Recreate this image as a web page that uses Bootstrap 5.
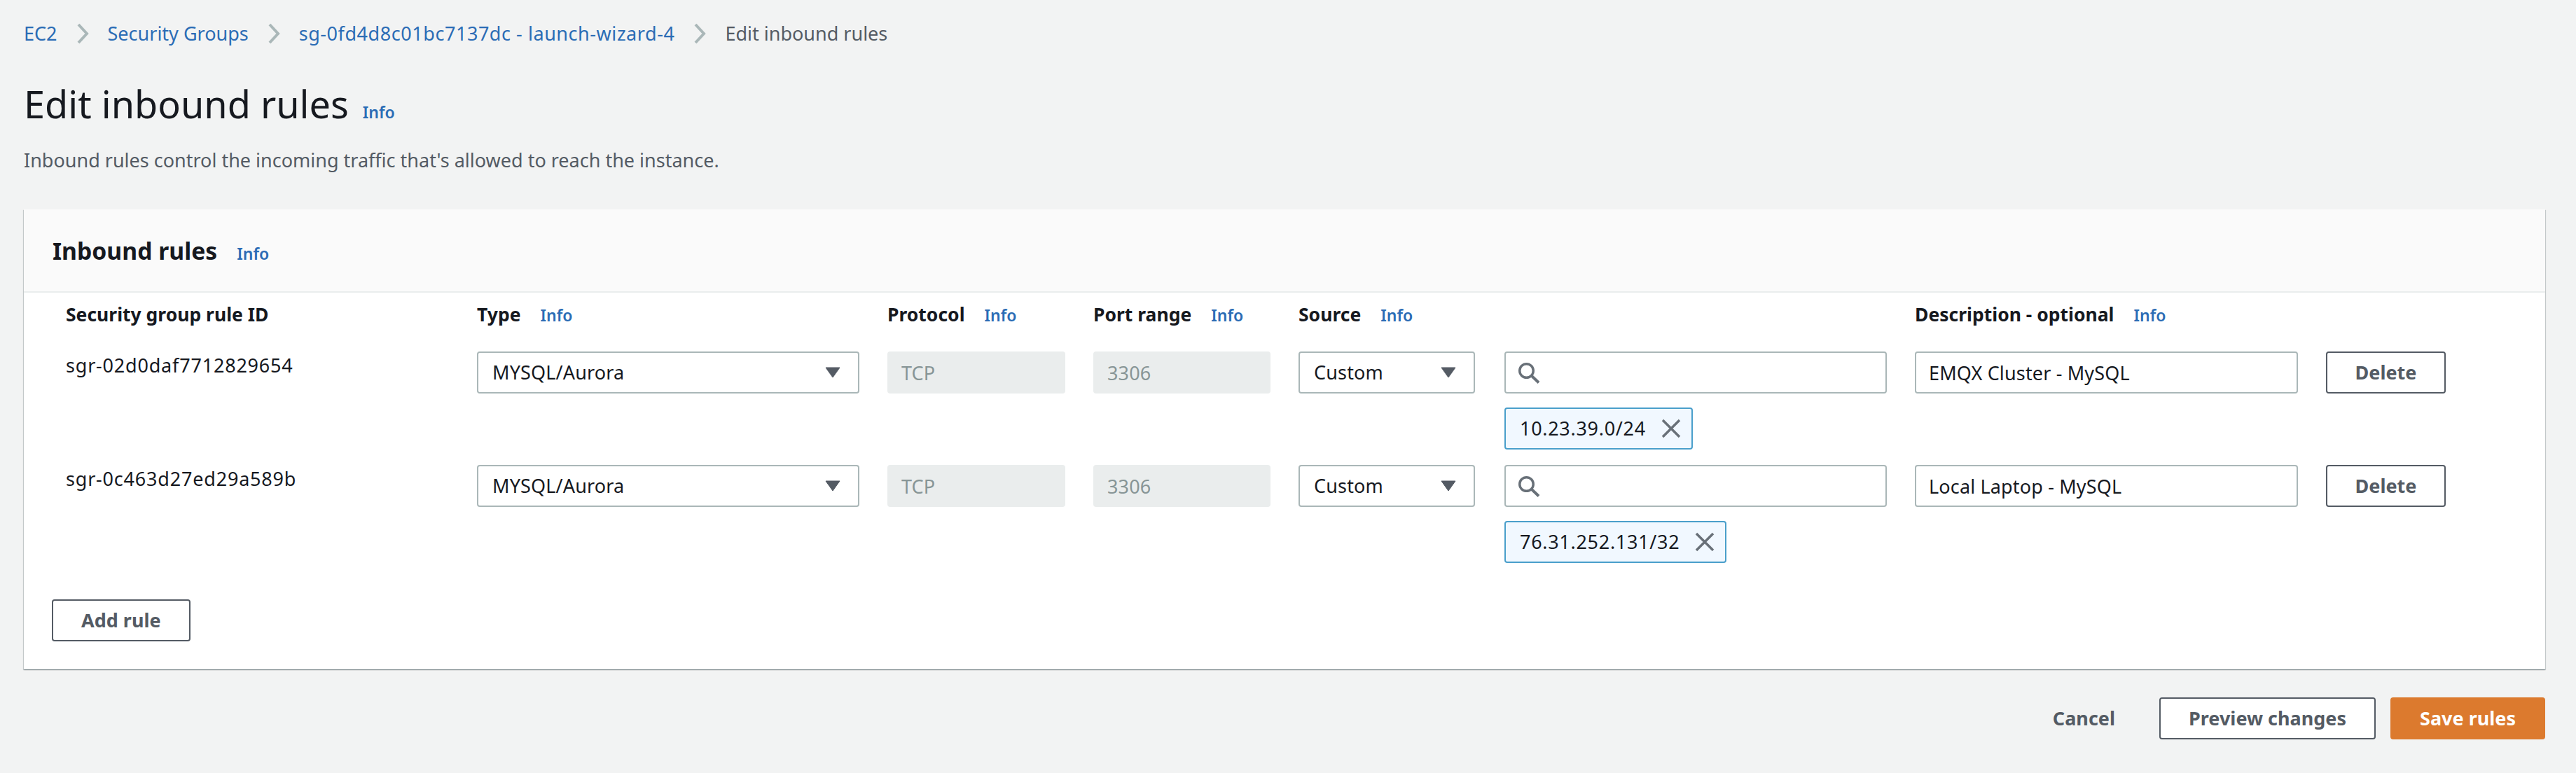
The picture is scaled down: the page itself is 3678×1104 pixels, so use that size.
<!DOCTYPE html>
<html lang="en">
<head>
  <meta charset="UTF-8">
  <meta name="viewport" content="width=device-width, initial-scale=1">
  <title>Edit inbound rules</title>
  <link href="https://cdn.jsdelivr.net/npm/bootstrap@5.3.2/dist/css/bootstrap.min.css" rel="stylesheet">
  <style>
    body { background: #f2f3f3; color: #16191f; font-family: "Noto Sans", sans-serif; font-size: 27px; line-height: 36px; }
    a { color: #2b6cb5; text-decoration: none; }
    .page-wrap { padding: 30px 44px 0 34px; }

    .crumbs { margin: 0; gap: 27px; align-items: center; --bs-breadcrumb-margin-bottom: 0; font-size: 27px; }
    .crumbs .breadcrumb-item { padding: 0; color: #545b64; }
    .crumbs .breadcrumb-item::before { display: none; }
    .crumb-sep { width: 18px; height: 30px; flex: none; }
    .num-text { letter-spacing: .55px; }

    .page-title { font-size: 54px; line-height: 64px; font-weight: 400; margin: 50px 0 31px; }
    .page-title .info-link { margin-left: 20px; }
    .info-link { font-size: 23px; font-weight: 600; margin-left: 28px; line-height: 1; }
    .page-desc { color: #545b64; margin: 0; }

    .rules-card { margin-top: 52px; border: 0; border-radius: 0; box-shadow: 0 1px 1px 0 rgba(0,28,36,.3), 1px 1px 1px 0 rgba(0,28,36,.15), -1px 1px 1px 0 rgba(0,28,36,.15); }
    .rules-head { background: #fafafa; border-bottom: 2px solid #eaeded; border-radius: 0 !important; height: 119px; padding: 0 41px; display: flex; align-items: center; }
    .rules-head h2 { font-size: 33.7px; font-weight: 700; line-height: 40px; margin: 0; }
    .rules-body { padding: 13px 40px 40px; }

    .rule-grid { display: grid; grid-template-columns: 547px 546px 254px 253px 254px 546px 547px 171px; column-gap: 40px; row-gap: 22px; padding-left: 20px; }
    .col-label { font-weight: 700; font-size: 26.5px; margin-bottom: 13px; white-space: nowrap; }
    .rule-id { line-height: 40px; letter-spacing: .8px; }

    .aws-field { height: 60px; border: 2px solid #aab7b8; border-radius: 4px; font-size: 27px; padding: 0 18px; color: #16191f; box-shadow: none; line-height: 56px; letter-spacing: .15px; }
    .aws-field:disabled { background: #eaeded; border-color: #eaeded; color: #879596; opacity: 1; }
    select.aws-field { background-image: none; padding: 0 20px; }
    .source-field { width: 252px; }
    .field-arrow { position: absolute; right: 27px; top: 22px; width: 22px; height: 16px; pointer-events: none; }
    .field-search { position: absolute; left: 20px; top: 16px; width: 32px; height: 30px; }
    .search-input { padding-left: 60px; }

    .ip-token { display: inline-flex; align-items: center; gap: 22px; height: 60px; margin-top: 20px; padding: 0 15px 0 20px; background: #f1f8ff; border: 2px solid #4a9fcb; border-radius: 4px; letter-spacing: .7px; }
    .ip-token svg { width: 28px; height: 28px; }

    .btn-aws { height: 60px; padding: 0 40px; border: 2px solid #545b64; border-radius: 4px; background: #fff; color: #545b64; font-size: 27px; font-weight: 700; line-height: 56px; white-space: nowrap; }
    .btn-aws-link { border-color: transparent; background: transparent; }
    .btn-aws-save { background: #dc7a2e; border-color: #dc7a2e; color: #fff; }
    .add-row { margin-top: 52px; }
    .form-actions { gap: 21px; margin-top: 40px; }
  </style>
</head>
<body>
  <div class="page-wrap">

    <nav aria-label="breadcrumb">
      <ol class="breadcrumb crumbs">
        <li class="breadcrumb-item"><a href="#">EC2</a></li>
        <svg class="crumb-sep" viewBox="0 0 18 30"><path d="M3 2l12 13L3 28" fill="none" stroke="#aab7b8" stroke-width="4"/></svg>
        <li class="breadcrumb-item"><a href="#">Security Groups</a></li>
        <svg class="crumb-sep" viewBox="0 0 18 30"><path d="M3 2l12 13L3 28" fill="none" stroke="#aab7b8" stroke-width="4"/></svg>
        <li class="breadcrumb-item"><a class="num-text" href="#">sg-0fd4d8c01bc7137dc - launch-wizard-4</a></li>
        <svg class="crumb-sep" viewBox="0 0 18 30"><path d="M3 2l12 13L3 28" fill="none" stroke="#aab7b8" stroke-width="4"/></svg>
        <li class="breadcrumb-item active" aria-current="page">Edit inbound rules</li>
      </ol>
    </nav>

    <h1 class="page-title">Edit inbound rules<a class="info-link" href="#">Info</a></h1>
    <p class="page-desc">Inbound rules control the incoming traffic that's allowed to reach the instance.</p>

    <div class="card rules-card">
      <div class="card-header rules-head">
        <h2>Inbound rules<a class="info-link" href="#">Info</a></h2>
      </div>
      <div class="card-body rules-body">
        <div class="rule-grid">
          <div class="col-label">Security group rule ID</div>
          <div class="col-label">Type<a class="info-link" href="#">Info</a></div>
          <div class="col-label">Protocol<a class="info-link" href="#">Info</a></div>
          <div class="col-label">Port range<a class="info-link" href="#">Info</a></div>
          <div class="col-label">Source<a class="info-link" href="#">Info</a></div>
          <div></div>
          <div class="col-label">Description - optional<a class="info-link" href="#">Info</a></div>
          <div></div>

          <div class="rule-id">sgr-02d0daf7712829654</div>
          <div class="position-relative align-self-start">
            <select class="form-select aws-field"><option>MYSQL/Aurora</option></select>
            <svg class="field-arrow" viewBox="0 0 22 16"><path d="M1 1h20L11 15z" fill="#545b64" stroke="#545b64" stroke-linejoin="round"/></svg>
          </div>
          <div><input class="form-control aws-field" value="TCP" disabled></div>
          <div><input class="form-control aws-field" value="3306" disabled></div>
          <div class="position-relative align-self-start source-field">
            <select class="form-select aws-field"><option>Custom</option></select>
            <svg class="field-arrow" viewBox="0 0 22 16"><path d="M1 1h20L11 15z" fill="#545b64" stroke="#545b64" stroke-linejoin="round"/></svg>
          </div>
          <div>
            <div class="position-relative">
              <input class="form-control aws-field search-input" type="text">
              <svg class="field-search" viewBox="0 0 32 30"><circle cx="11.5" cy="11.5" r="9.75" fill="none" stroke="#687078" stroke-width="3.5"/><path d="M18.5 18.5L29 28.5" stroke="#687078" stroke-width="4"/></svg>
            </div>
            <span class="ip-token">10.23.39.0/24<svg viewBox="0 0 28 28"><path d="M2 2l24 24M26 2L2 26" stroke="#687078" stroke-width="3.5"/></svg></span>
          </div>
          <div><input class="form-control aws-field" value="EMQX Cluster - MySQL"></div>
          <div><button type="button" class="btn btn-aws w-100 px-0">Delete</button></div>

          <div class="rule-id">sgr-0c463d27ed29a589b</div>
          <div class="position-relative align-self-start">
            <select class="form-select aws-field"><option>MYSQL/Aurora</option></select>
            <svg class="field-arrow" viewBox="0 0 22 16"><path d="M1 1h20L11 15z" fill="#545b64" stroke="#545b64" stroke-linejoin="round"/></svg>
          </div>
          <div><input class="form-control aws-field" value="TCP" disabled></div>
          <div><input class="form-control aws-field" value="3306" disabled></div>
          <div class="position-relative align-self-start source-field">
            <select class="form-select aws-field"><option>Custom</option></select>
            <svg class="field-arrow" viewBox="0 0 22 16"><path d="M1 1h20L11 15z" fill="#545b64" stroke="#545b64" stroke-linejoin="round"/></svg>
          </div>
          <div>
            <div class="position-relative">
              <input class="form-control aws-field search-input" type="text">
              <svg class="field-search" viewBox="0 0 32 30"><circle cx="11.5" cy="11.5" r="9.75" fill="none" stroke="#687078" stroke-width="3.5"/><path d="M18.5 18.5L29 28.5" stroke="#687078" stroke-width="4"/></svg>
            </div>
            <span class="ip-token">76.31.252.131/32<svg viewBox="0 0 28 28"><path d="M2 2l24 24M26 2L2 26" stroke="#687078" stroke-width="3.5"/></svg></span>
          </div>
          <div><input class="form-control aws-field" value="Local Laptop - MySQL"></div>
          <div><button type="button" class="btn btn-aws w-100 px-0">Delete</button></div>
        </div>

        <div class="add-row"><button type="button" class="btn btn-aws">Add rule</button></div>
      </div>
    </div>

    <div class="d-flex justify-content-end form-actions">
      <button type="button" class="btn btn-aws btn-aws-link">Cancel</button>
      <button type="button" class="btn btn-aws">Preview changes</button>
      <button type="button" class="btn btn-aws btn-aws-save">Save rules</button>
    </div>
  </div>
  <script src="https://cdn.jsdelivr.net/npm/bootstrap@5.3.2/dist/js/bootstrap.bundle.min.js"></script>
</body>
</html>
